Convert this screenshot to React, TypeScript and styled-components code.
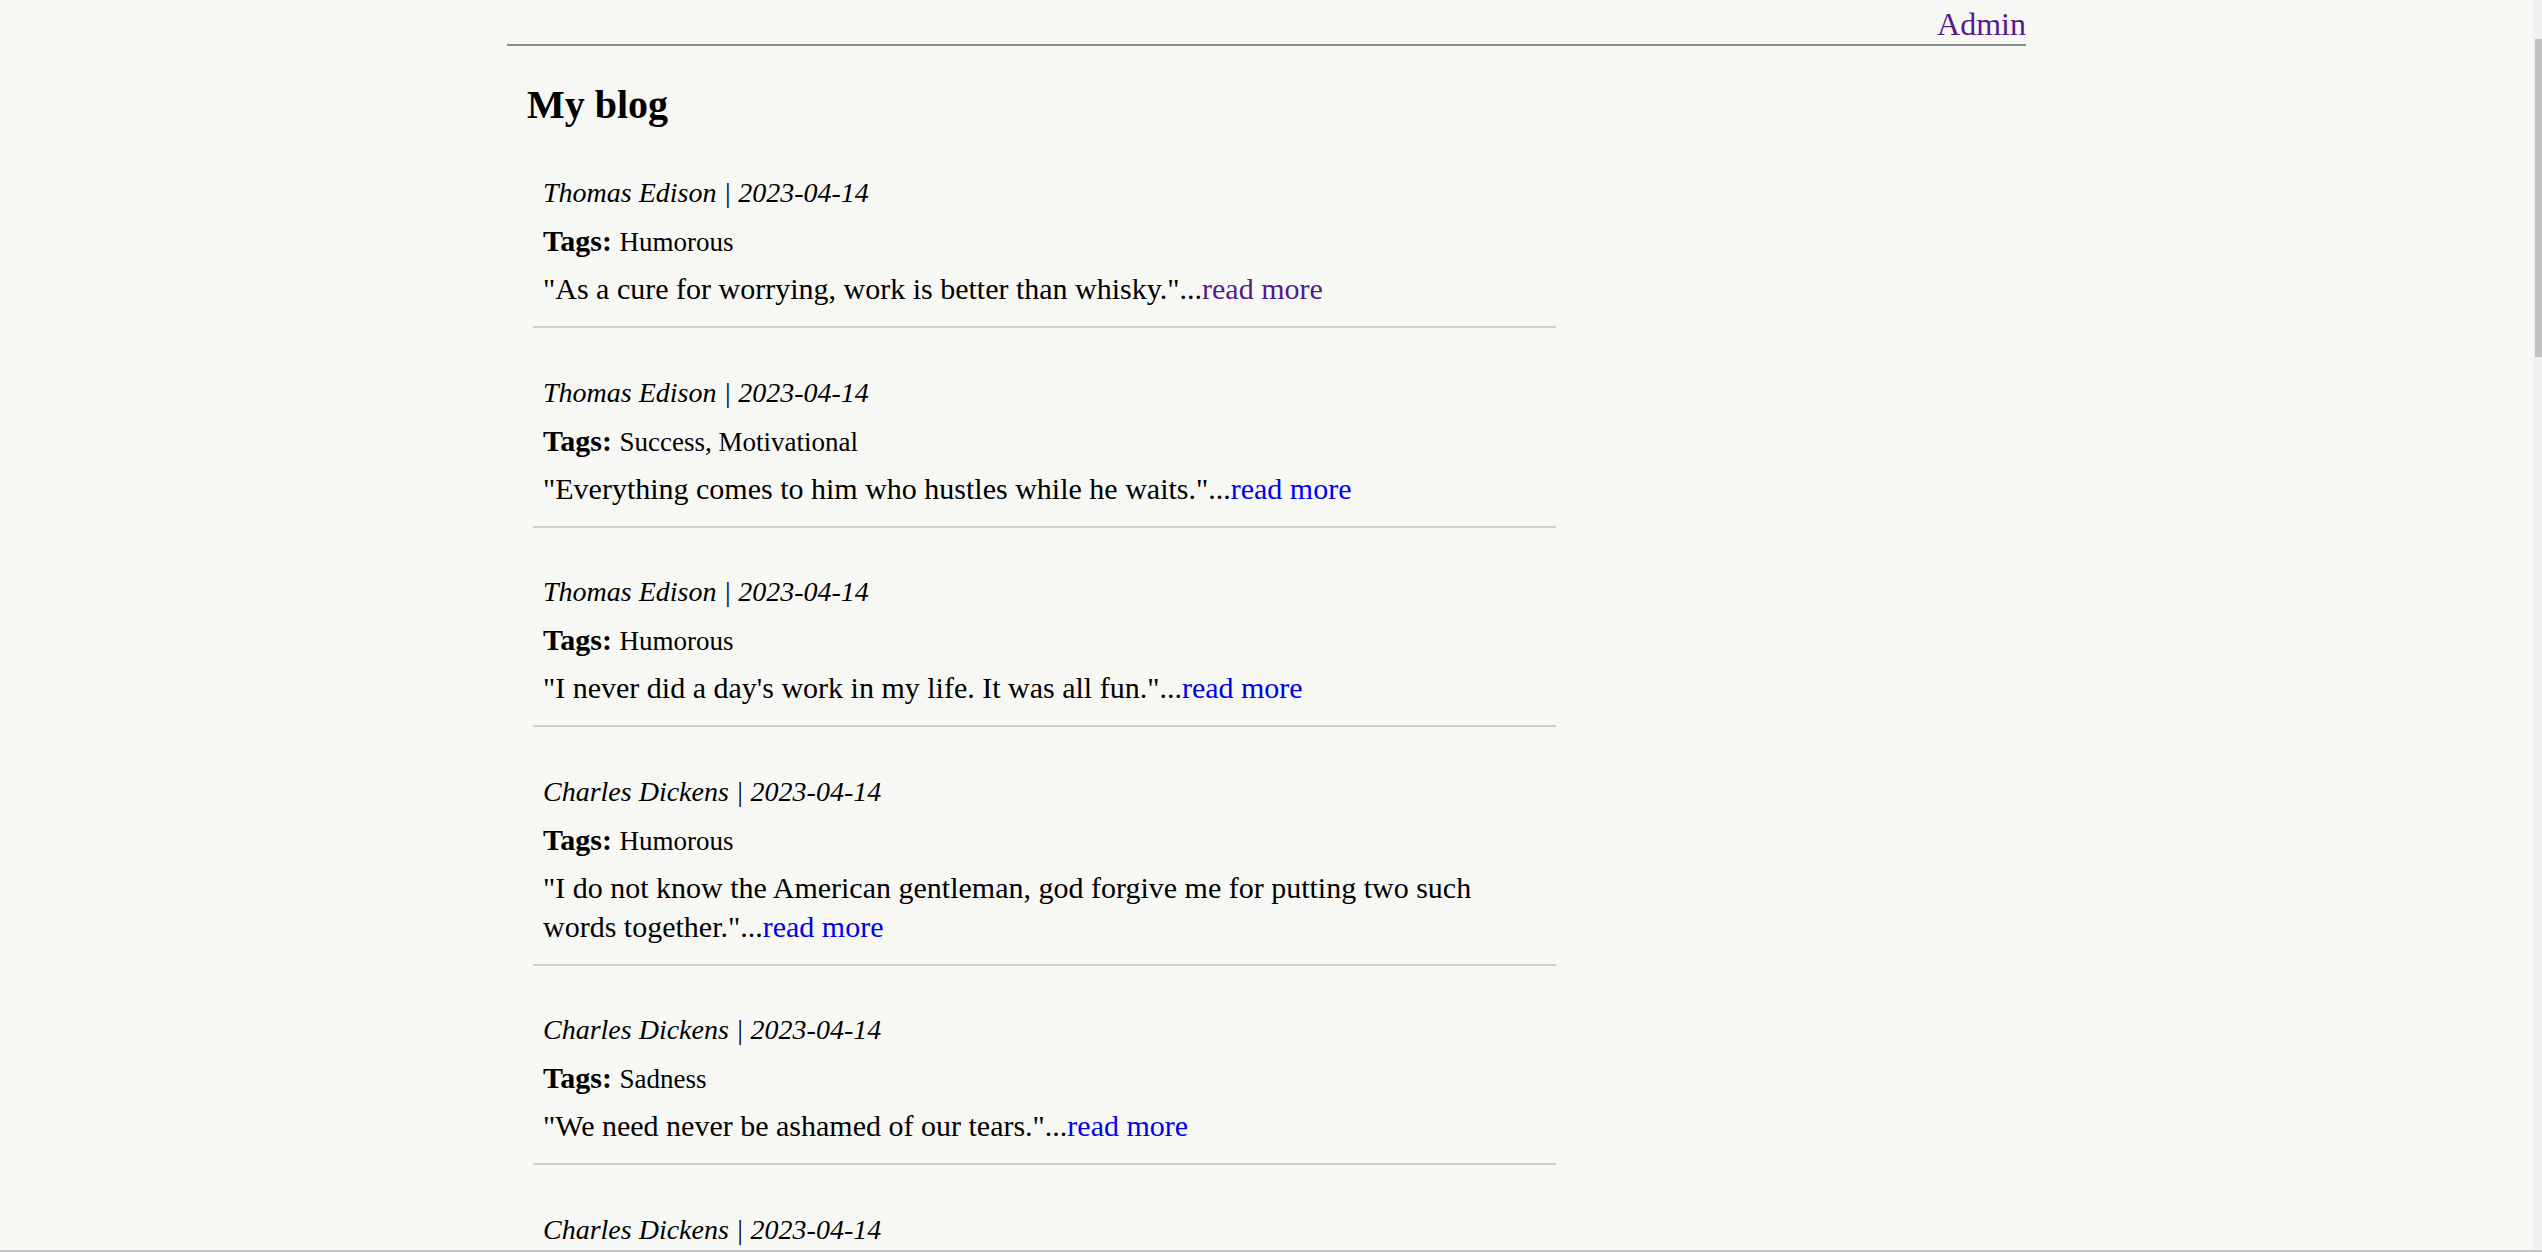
import React from "react";
import styled, { createGlobalStyle } from "styled-components";

const GlobalStyle = createGlobalStyle`
  html, body {
    margin: 0;
    padding: 0;
    background: #f7f8f4;
  }
  body {
    font-family: "Liberation Serif", "Times New Roman", serif;
    color: #000;
  }
`;

const Root = styled.div`
  padding-right: 9px;
`;

const Page = styled.div`
  width: 1519px;
  margin: 0 auto;
`;

const Header = styled.header`
  display: flex;
  justify-content: flex-end;
  align-items: flex-end;
  height: 40px;
  padding-bottom: 4px;
  border-bottom: 2px solid #8c8c8c;
`;

const NavLink = styled.a`
  font-size: 32px;
  line-height: 1;
  color: #551a8b;
  text-decoration: none;
`;

const Main = styled.main`
  padding-left: 20px;
`;

const Title = styled.h2`
  margin: 36px 0 0;
  font-size: 40px;
  line-height: 46px;
  font-weight: 700;
`;

const PostList = styled.div`
  display: flex;
  flex-direction: column;
  width: 1023px;
  margin-left: 6px;
`;

const Post = styled.article`
  padding: 40.5px 10px 18px;
  border-bottom: 2px solid #cfcfcf;
  &:first-child {
    padding-top: 41px;
  }
`;

const Meta = styled.div`
  font-size: 28px;
  font-style: italic;
  line-height: 48px;
`;

const TagsRow = styled.div`
  font-size: 30px;
  line-height: 48px;
`;

const TagsLabel = styled.strong`
  font-weight: 700;
`;

const TagsValue = styled.span`
  font-size: 27px;
`;

const Quote = styled.p`
  margin: 3px 0 0;
  font-size: 30px;
  line-height: 39px;
`;

const ReadMore = styled.a<{ $visited?: boolean }>`
  color: ${(p) => (p.$visited ? "#551a8b" : "#0000ee")};
  text-decoration: none;
`;

/* Window chrome drawn over the page: the thin scrollbar and the bottom frame edge */
const ScrollTrack = styled.div`
  position: fixed;
  top: 0;
  right: 0;
  bottom: 0;
  width: 9px;
  background: #f0f0f0;
`;

const ScrollThumb = styled.div`
  position: absolute;
  top: 39px;
  right: 0;
  width: 7px;
  height: 318px;
  background: #c1c1c1;
`;

const FrameEdge = styled.div`
  position: fixed;
  left: 0;
  right: 0;
  bottom: 0;
  height: 2px;
  background: #c6c6c6;
`;

type Entry = { author: string; date: string; tags: string; quote: string; visited?: boolean };

const entries: Entry[] = [
  { author: "Thomas Edison", date: "2023-04-14", tags: "Humorous", quote: "\"As a cure for worrying, work is better than whisky.\"", visited: true },
  { author: "Thomas Edison", date: "2023-04-14", tags: "Success, Motivational", quote: "\"Everything comes to him who hustles while he waits.\"" },
  { author: "Thomas Edison", date: "2023-04-14", tags: "Humorous", quote: "\"I never did a day's work in my life. It was all fun.\"" },
  { author: "Charles Dickens", date: "2023-04-14", tags: "Humorous", quote: "\"I do not know the American gentleman, god forgive me for putting two such words together.\"" },
  { author: "Charles Dickens", date: "2023-04-14", tags: "Sadness", quote: "\"We need never be ashamed of our tears.\"" },
  { author: "Charles Dickens", date: "2023-04-14", tags: "Inspirational", quote: "\"No one is useless in this world who lightens the burdens of another.\"" },
  { author: "Charles Dickens", date: "2023-04-14", tags: "Life", quote: "\"Reflect upon your present blessings, of which every man has plenty.\"" },
  { author: "Mark Twain", date: "2023-04-14", tags: "Humorous", quote: "\"The secret of getting ahead is getting started.\"" },
  { author: "Mark Twain", date: "2023-04-14", tags: "Motivational", quote: "\"Kindness is the language which the deaf can hear and the blind can see.\"" },
  { author: "Mark Twain", date: "2023-04-14", tags: "Humorous", quote: "\"Get your facts first, then you can distort them as you please.\"" },
  { author: "Oscar Wilde", date: "2023-04-14", tags: "Humorous", quote: "\"I can resist everything except temptation.\"" },
  { author: "Oscar Wilde", date: "2023-04-14", tags: "Life", quote: "\"Be yourself; everyone else is already taken.\"" },
  { author: "Oscar Wilde", date: "2023-04-14", tags: "Humorous", quote: "\"Always forgive your enemies; nothing annoys them so much.\"" },
  { author: "Albert Einstein", date: "2023-04-14", tags: "Success", quote: "\"Try not to become a man of success, but rather try to become a man of value.\"" },
  { author: "Albert Einstein", date: "2023-04-14", tags: "Motivational", quote: "\"Life is like riding a bicycle. To keep your balance you must keep moving.\"" },
  { author: "Albert Einstein", date: "2023-04-14", tags: "Wisdom", quote: "\"Imagination is more important than knowledge.\"" },
  { author: "Benjamin Franklin", date: "2023-04-14", tags: "Wisdom", quote: "\"Well done is better than well said.\"" },
  { author: "Benjamin Franklin", date: "2023-04-14", tags: "Motivational", quote: "\"Energy and persistence conquer all things.\"" },
  { author: "Benjamin Franklin", date: "2023-04-14", tags: "Humorous", quote: "\"Fish and visitors stink after three days.\"" },
  { author: "Winston Churchill", date: "2023-04-14", tags: "Success", quote: "\"Success is not final, failure is not fatal: it is the courage to continue that counts.\"" },
  { author: "Winston Churchill", date: "2023-04-14", tags: "Humorous", quote: "\"I am easily satisfied with the very best.\"" },
  { author: "Winston Churchill", date: "2023-04-14", tags: "Motivational", quote: "\"Never, never, never give up.\"" },
  { author: "Abraham Lincoln", date: "2023-04-14", tags: "Wisdom", quote: "\"Whatever you are, be a good one.\"" },
  { author: "Abraham Lincoln", date: "2023-04-14", tags: "Life", quote: "\"The best way to predict your future is to create it.\"" },
];

export default function App() {
  return (
    <Root>
      <GlobalStyle />
      <Page>
        <Header>
          <NavLink href="#">Admin</NavLink>
        </Header>
        <Main>
          <Title>My blog</Title>
          <PostList>
            {entries.map((e, i) => (
              <Post key={i}>
                <Meta>
                  {e.author} | {e.date}
                </Meta>
                <TagsRow>
                  <TagsLabel>Tags:</TagsLabel> <TagsValue>{e.tags}</TagsValue>
                </TagsRow>
                <Quote>
                  {e.quote}...
                  <ReadMore href="#" $visited={e.visited}>
                    read more
                  </ReadMore>
                </Quote>
              </Post>
            ))}
          </PostList>
        </Main>
      </Page>
      <ScrollTrack>
        <ScrollThumb />
      </ScrollTrack>
      <FrameEdge />
    </Root>
  );
}
